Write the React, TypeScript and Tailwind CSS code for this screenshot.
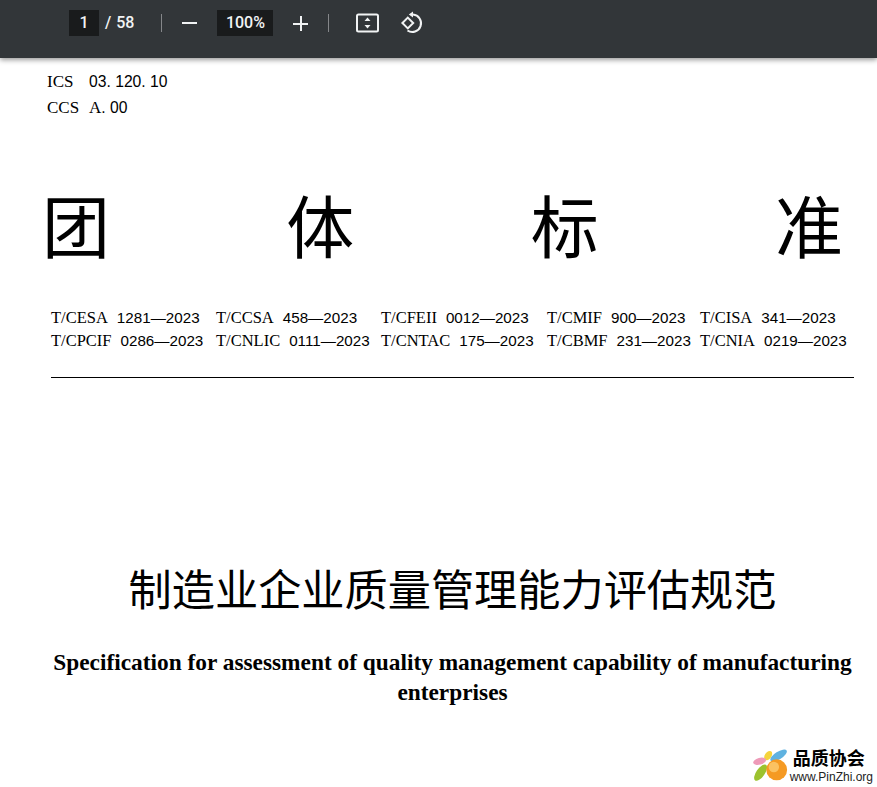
const codes = [
  ["T/CESA", "1281—2023"],
  ["T/CCSA", "458—2023"],
  ["T/CFEII", "0012—2023"],
  ["T/CMIF", "900—2023"],
  ["T/CISA", "341—2023"],
  ["T/CPCIF", "0286—2023"],
  ["T/CNLIC", "0111—2023"],
  ["T/CNTAC", "175—2023"],
  ["T/CBMF", "231—2023"],
  ["T/CNIA", "0219—2023"],
];

function FitIcon() {
  return (
    <svg width="24" height="20" viewBox="0 0 24 20" fill="none" className="block">
      <rect x="1" y="1.5" width="21" height="17" rx="1.5" stroke="#f1f3f4" strokeWidth="2" />
      <path d="M11.5 4.5 L14.5 8 H8.5 Z M11.5 15.5 L14.5 12 H8.5 Z" fill="#f1f3f4" />
    </svg>
  );
}

function RotateIcon() {
  return (
    <svg width="24" height="24" viewBox="0 0 24 24" fill="none" className="block">
      <path d="M13 0.5 L13 6.5 L8.8 3.5 Z" fill="#f1f3f4" />
      <path d="M13 3.6 A8.7 8.7 0 1 1 7.5 19.5" stroke="#f1f3f4" strokeWidth="2" />
      <path d="M7.8 6.6 L13.2 12 L7.8 17.4 L2.4 12 Z" stroke="#f1f3f4" strokeWidth="2" />
    </svg>
  );
}

function Logo() {
  return (
    <svg width="36" height="34" viewBox="0 0 38 34" className="block">
      <ellipse cx="16" cy="6" rx="3.5" ry="5.5" fill="#f5d33c" transform="rotate(35 16 6)" />
      <ellipse cx="27" cy="6" rx="4" ry="10" fill="#5fb2e0" transform="rotate(58 27 6)" />
      <ellipse cx="7" cy="12" rx="3.5" ry="7" fill="#ee9ab8" transform="rotate(75 7 12)" />
      <ellipse cx="8" cy="24" rx="4.5" ry="10" fill="#9cc22e" transform="rotate(35 8 24)" />
      <circle cx="25" cy="21" r="11" fill="#f59a23" />
      <circle cx="22" cy="18" r="5.5" fill="#fbc262" />
    </svg>
  );
}

export default function App() {
  return (
    <div className="relative h-[787px] w-[877px] overflow-hidden bg-white font-['Liberation_Serif',serif] text-black">
      <header className="relative z-10 flex h-[58px] items-start bg-[#323639] pl-[69px] pt-[10px] font-['Roboto',sans-serif] font-medium text-[#f1f3f4] shadow-[0_2px_5px_rgba(0,0,0,0.4)]">
        <span className="flex h-[26px] w-[30px] items-center justify-center bg-[#191b1c] text-[16px]">1</span>
        <span className="ml-[6px] flex h-[26px] items-center text-[16px]">
          <span className="mr-[5px]">/</span>58
        </span>
        <span className="ml-[27px] mt-[4px] h-[18px] w-px bg-[#85878a]" />
        <span className="ml-[20px] mt-[12px] h-[2px] w-[15px] bg-[#f1f3f4]" />
        <span className="ml-[20px] flex h-[26px] w-[56px] items-center justify-center bg-[#191b1c] text-[16px]">100%</span>
        <span className="relative ml-[20px] mt-[6px] h-[15px] w-[15px]">
          <span className="absolute left-0 top-[6.5px] h-[2px] w-[15px] bg-[#f1f3f4]" />
          <span className="absolute left-[6.5px] top-0 h-[15px] w-[2px] bg-[#f1f3f4]" />
        </span>
        <span className="ml-[20px] mt-[4px] h-[18px] w-px bg-[#85878a]" />
        <span className="ml-[27px] mt-[3px]"><FitIcon /></span>
        <span className="ml-[20px] mt-[1px]"><RotateIcon /></span>
      </header>

      <main className="flex flex-col">
        <div className="ml-[47px] mt-[11px] grid grid-cols-[42px_auto] justify-start text-[17px] leading-[26px]">
          <span>ICS</span>
          <span className="font-['Liberation_Sans',sans-serif] text-[15.7px]">03. 120. 10</span>
          <span>CCS</span>
          <span><span>A</span><span className="font-['Liberation_Sans',sans-serif] text-[15.7px]">. 00</span></span>
        </div>

        <div className="ml-[42px] mr-[34px] mt-[63px] flex justify-between font-['Noto_Sans_CJK_SC',sans-serif] text-[68px] leading-[80px]">
          <span>团</span><span>体</span><span>标</span><span>准</span>
        </div>

        <div className="ml-[51px] mr-[23px] mt-[42px] grid grid-cols-[165px_165px_166px_153px_auto] text-[16.5px] leading-[23px]">
          {codes.map(([org, num]) => (
            <span key={org} className="whitespace-nowrap">
              {org}
              <span className="ml-[9px] font-['Liberation_Sans',sans-serif] text-[15.2px]">{num}</span>
            </span>
          ))}
        </div>

        <div className="ml-[51px] mr-[23px] mt-[25px] h-px bg-black" />

        <h1 className="mt-[179px] ml-[51px] mr-[23px] text-center font-['Noto_Sans_CJK_SC',sans-serif] text-[43.2px] font-normal leading-[60px] whitespace-nowrap">
          制造业企业质量管理能力评估规范
        </h1>

        <p className="ml-[51px] mr-[23px] mt-[30px] text-center text-[23.35px] font-bold leading-[30px]">
          Specification for assessment of quality management capability of manufacturing enterprises
        </p>
      </main>

      <div className="absolute bottom-[4px] right-[4px] flex items-center gap-[1px]">
        <Logo />
        <div className="flex flex-col items-center gap-[3px]">
          <span className="pr-[5px] font-['Liberation_Sans','Noto_Sans_CJK_SC',sans-serif] text-[18px] font-bold leading-[18px]">品质协会</span>
          <span className="font-['Liberation_Sans',sans-serif] text-[12px] leading-[12px] text-[#222]">www.PinZhi.org</span>
        </div>
      </div>
    </div>
  );
}
